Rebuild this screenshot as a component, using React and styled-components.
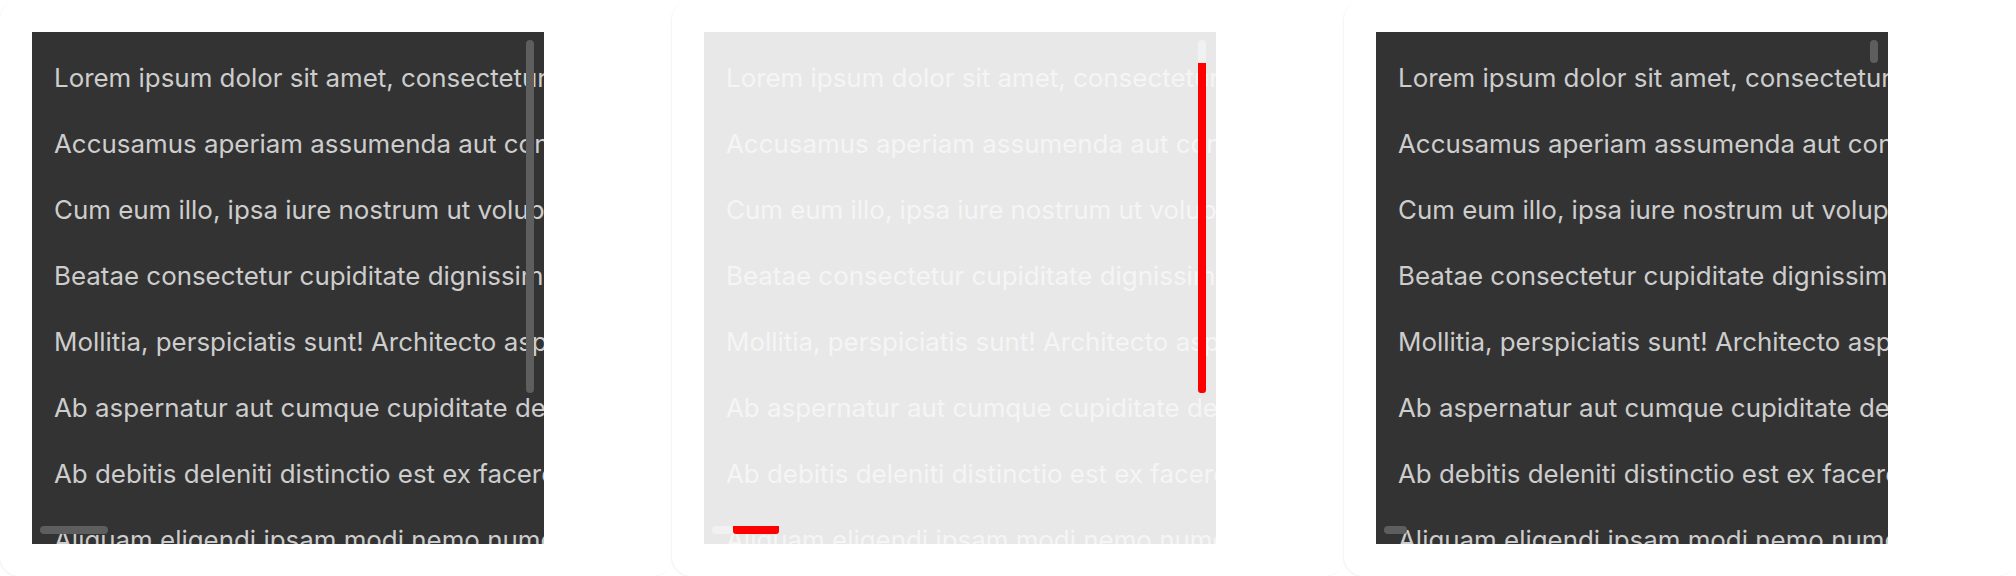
import styled, { createGlobalStyle } from "styled-components";

const GlobalStyle = createGlobalStyle`
  html, body {
    margin: 0;
    padding: 0;
    background: #fff;
    overflow: hidden;
  }
  body {
    font-family: Inter, "Noto Sans", sans-serif;
  }
`;

const lines = [
  "Lorem ipsum dolor sit amet, consectetur adipisicing elit.",
  "Accusamus aperiam assumenda aut consequatur cumque.",
  "Cum eum illo, ipsa iure nostrum ut voluptatem.",
  "Beatae consectetur cupiditate dignissimos error.",
  "Mollitia, perspiciatis sunt! Architecto asperiores.",
  "Ab aspernatur aut cumque cupiditate deleniti.",
  "Ab debitis deleniti distinctio est ex facere.",
  "Aliquam eligendi ipsam modi nemo numquam.",
  "Corporis delectus dolorem eius excepturi.",
];

const themes = {
  dark: { bg: "#333333", text: "#cdcdcd", thumb: "#5e5e5e" },
  light: { bg: "#e8e8e8", text: "#f5f5f5", thumb: "#f1f1f1" },
};

const Grid = styled.div`
  display: grid;
  grid-template-columns: repeat(3, 672px);
  height: 576px;
`;

const Card = styled.div`
  box-sizing: border-box;
  height: 576px;
  padding: 32px;
  background: #fff;
  border-radius: 20px;
  box-shadow: -1px 1px 2px rgba(0, 0, 0, 0.05);
`;

const Viewport = styled.div`
  position: relative;
  width: 512px;
  height: 512px;
  overflow: hidden;
  background: ${(p) => themes[p.$tone].bg};
`;

const Content = styled.div`
  padding: 26px 22px;
  color: ${(p) => themes[p.$tone].text};
`;

const Line = styled.p`
  margin: 0 0 26px;
  font-size: 25.9px;
  line-height: 40px;
  white-space: nowrap;
`;

const Track = styled.div`
  position: absolute;
  display: flex;
  flex-direction: ${(p) => (p.$axis === "y" ? "column" : "row")};
  ${(p) =>
    p.$axis === "y"
      ? "top: 8px; right: 10px; width: 8px;"
      : "left: 8px; bottom: 10px; height: 8px;"}
`;

const Thumb = styled.div`
  flex: none;
  border-radius: 4px;
  background: ${(p) => themes[p.$tone].thumb};
`;

const Overflow = styled.div`
  flex: none;
  align-self: stretch;
  background: #ff0000;
  border-radius: 0 0 3px 3px;
`;

const panels = [
  { tone: "dark", vThumb: 353, hThumb: 68 },
  { tone: "light", vThumb: 23, hThumb: 21, vRed: 330, hRed: 46 },
  { tone: "dark", vThumb: 23, hThumb: 23 },
];

const Scroller = ({ tone, vThumb, hThumb, vRed, hRed }) => (
  <Viewport $tone={tone}>
    <Content $tone={tone}>
      {lines.map((l) => (
        <Line key={l}>{l}</Line>
      ))}
    </Content>
    <Track $axis="y">
      <Thumb $tone={tone} style={{ height: vThumb }} />
      {vRed && <Overflow style={{ height: vRed, width: 8 }} />}
    </Track>
    <Track $axis="x">
      <Thumb $tone={tone} style={{ width: hThumb }} />
      {hRed && <Overflow style={{ width: hRed, height: 8 }} />}
    </Track>
  </Viewport>
);

export default function App() {
  return (
    <>
      <GlobalStyle />
      <Grid>
        {panels.map((p, i) => (
          <Card key={i}>
            <Scroller {...p} />
          </Card>
        ))}
      </Grid>
    </>
  );
}
